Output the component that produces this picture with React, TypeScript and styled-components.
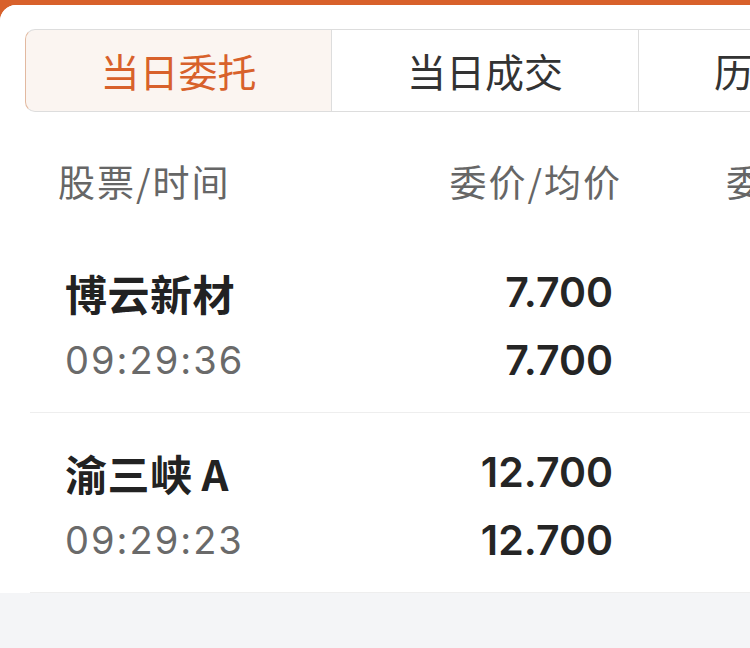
import React from "react"
import styled, { createGlobalStyle } from "styled-components"

const ORANGE = "#d8612b"
const CJK = `"Noto Sans CJK SC", "Noto Sans", sans-serif`
const NUM = `Inter, "Noto Sans CJK SC", sans-serif`

const GlobalStyle = createGlobalStyle`
  html, body {
    margin: 0;
    padding: 0;
    width: 750px;
    height: 648px;
    overflow: hidden;
    background: ${ORANGE};
  }
  * {
    box-sizing: border-box;
  }
`

const Page = styled.div`
  width: 750px;
  height: 648px;
  padding-top: 5px;
  background: ${ORANGE};
  overflow: hidden;
`

const Card = styled.div`
  width: 1000px;
  height: 643px;
  background: #f4f5f7;
  border-top-left-radius: 16px;
  overflow: hidden;
  display: flex;
  flex-direction: column;
`

const Panel = styled.div`
  background: #ffffff;
  padding-top: 24px;
`

const Tabs = styled.div`
  display: flex;
  margin-left: 25px;
`

const Tab = styled.div<{ $active?: boolean }>`
  width: 307px;
  height: 83px;
  display: flex;
  align-items: center;
  justify-content: center;
  padding-bottom: 2px;
  white-space: nowrap;
  font-family: ${CJK};
  font-size: 39px;
  color: ${(p) => (p.$active ? ORANGE : "#333333")};
  background: ${(p) => (p.$active ? "#fbf5f1" : "#ffffff")};
  border: 1.5px solid #dddddd;
  border-left: ${(p) => (p.$active ? "1.5px solid #e2b9a0" : "none")};
  border-radius: ${(p) => (p.$active ? "10px 0 0 10px" : "0")};
`

const Table = styled.div`
  margin-left: 30px;
`

const HeaderRow = styled.div`
  display: grid;
  grid-template-columns: 298px 266px 300px;
  align-items: center;
  height: 121px;
  padding-left: 28px;
  padding-top: 17px;
  font-family: ${CJK};
  font-size: 37px;
  letter-spacing: 2px;
  color: #666666;
  white-space: nowrap;
`

const HeadCell = styled.div<{ $align?: "left" | "right" }>`
  text-align: ${(p) => p.$align ?? "left"};
`

const HeadExtra = styled.div`
  padding-left: 104px;
`

const Row = styled.div`
  display: grid;
  grid-template-columns: 300px 248px 200px;
  grid-template-rows: 68px 68px;
  align-content: center;
  height: 180px;
  padding-left: 35px;
  padding-top: 7px;
  border-bottom: 1.5px solid #eeeeee;
`

const Name = styled.div`
  align-self: center;
  font-family: ${CJK};
  font-size: 42px;
  font-weight: 700;
  color: #222222;
  letter-spacing: 0.5px;
  white-space: nowrap;
`

const Time = styled.div`
  align-self: center;
  font-family: ${NUM};
  font-size: 38px;
  color: #6a6a6a;
  letter-spacing: 2px;
`

const Price = styled.div`
  align-self: center;
  text-align: right;
  font-family: ${NUM};
  font-size: 41px;
  font-weight: 600;
  color: #252525;
`

const orders = [
  { name: "博云新材", time: "09:29:36", price: "7.700", avg: "7.700" },
  { name: "渝三峡\u2009A", time: "09:29:23", price: "12.700", avg: "12.700" },
]

const App = () => (
  <Page>
    <GlobalStyle />
    <Card>
      <Panel>
        <Tabs>
          <Tab $active>当日委托</Tab>
          <Tab>当日成交</Tab>
          <Tab>历史委托</Tab>
        </Tabs>
        <Table>
          <HeaderRow>
            <HeadCell>股票/时间</HeadCell>
            <HeadCell $align="right">委价/均价</HeadCell>
            <HeadExtra>委托/成交</HeadExtra>
          </HeaderRow>
          {orders.map((o) => (
            <Row key={o.name}>
              <Name>{o.name}</Name>
              <Price>{o.price}</Price>
              <div />
              <Time>{o.time}</Time>
              <Price>{o.avg}</Price>
              <div />
            </Row>
          ))}
        </Table>
      </Panel>
    </Card>
  </Page>
)

export default App
